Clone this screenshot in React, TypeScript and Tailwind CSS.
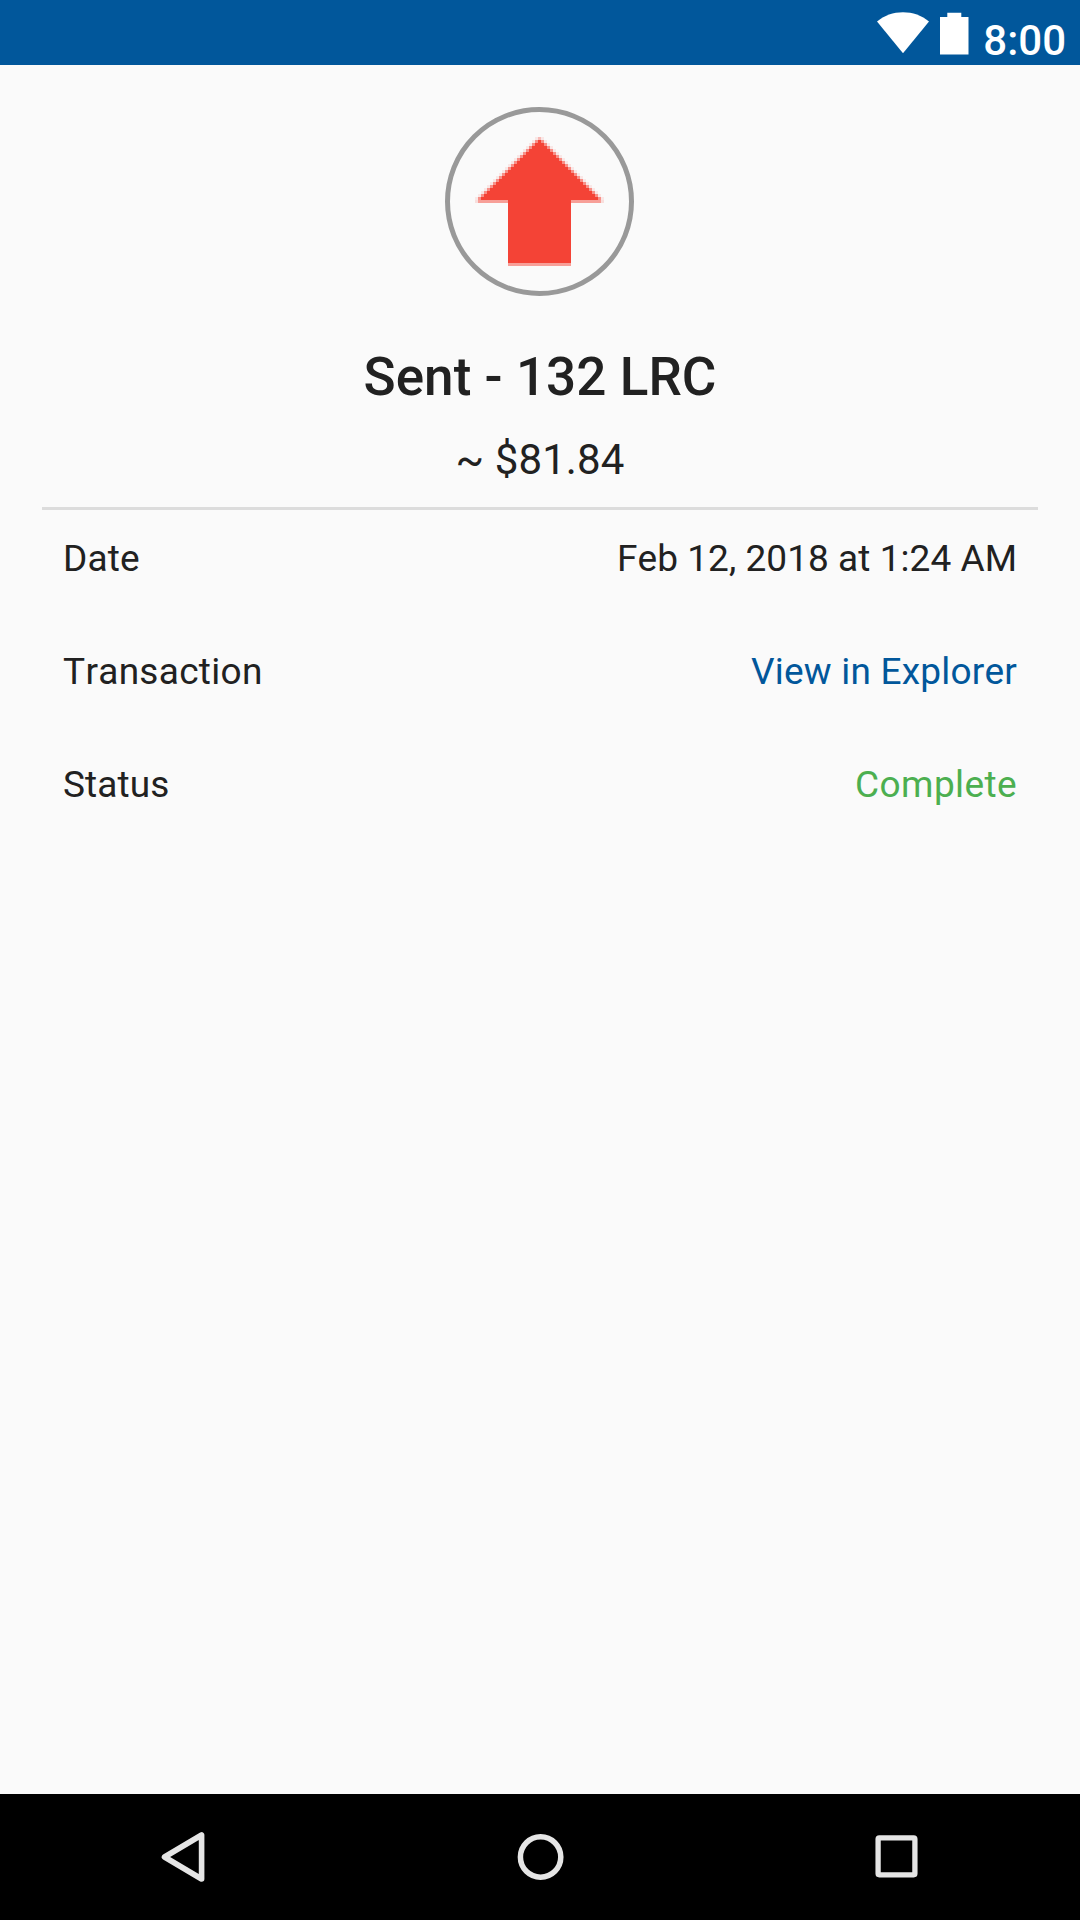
const arrowRows = Array.from({ length: 21 }, (_, i) => i);

function SentArrow() {
  return (
    <svg className="h-[129px] w-[129px]" viewBox="0 0 43 43" shapeRendering="crispEdges" fill="#f44336">
      {arrowRows.map((i) => (
        <g key={i}>
          {i > 0 && <rect x={22 - i} y={i} width={2 * i - 1} height={1} />}
          <rect x={21 - i} y={i} width={1} height={1} opacity={i === 0 ? 0.35 : 0.58} />
          {i > 0 && <rect x={21 + i} y={i} width={1} height={1} opacity={0.58} />}
          <rect x={20 - i} y={i} width={1} height={1} opacity={0.1} />
          <rect x={22 + i} y={i} width={1} height={1} opacity={0.1} />
        </g>
      ))}
      <rect x={1} y={21} width={41} height={1} opacity={0.5} />
      <rect x={0} y={21} width={1} height={1} opacity={0.15} />
      <rect x={42} y={21} width={1} height={1} opacity={0.15} />
      <rect x={11} y={21} width={21} height={21} />
      <rect x={11} y={42} width={21} height={1} opacity={0.5} />
    </svg>
  );
}

export default function App() {
  return (
    <div className="flex h-[1920px] w-[1080px] flex-col overflow-hidden bg-[#fafafa] font-[Roboto,sans-serif] text-[#212121] [font-kerning:none]">
      <header className="flex h-[65px] shrink-0 items-start justify-end bg-[#01579b] pr-[14px] text-white">
        <svg className="mt-3 h-[42px] w-[52px] shrink-0" viewBox="0 0 52 42"><path d="M0 9.5C14-3 38-3 52 9.5L26 41.3Z" fill="currentColor" /></svg>
        <svg className="mt-3 ml-[11px] h-[43px] w-[29px] shrink-0" viewBox="0 0 29 43"><path d="M7.3.8h14V5h7.2v37.4H0V5h7.3z" fill="currentColor" /></svg>
        <span className="mt-4 ml-[14px] text-[42px] leading-[49px] font-medium">8:00</span>
      </header>
      <main className="flex min-h-0 flex-1 flex-col px-[42px]">
        <div className="mt-[42px] mr-px flex h-[189px] w-[189px] items-center justify-center self-center rounded-full border-[5px] border-[#999999]">
          <SentArrow />
        </div>
        <h1 className="mt-[49px] text-center text-[53px] leading-[64px] font-medium tracking-[0.06px]">Sent - 132 LRC</h1>
        <p className="mt-[26px] text-center text-[42px] leading-[50px] tracking-[0.1px]">~ $81.84</p>
        <div className="mt-[22px] h-[3px] bg-[#dcdcdc]" />
        <dl className="flex flex-col px-[21px] text-[37px]">
          <div className="mb-px flex h-[98px] items-center justify-between"><dt className="tracking-[0.2px]">Date</dt><dd className="tracking-[0.05px]">Feb 12, 2018 at 1:24 AM</dd></div>
          <div className="flex h-[126px] items-center justify-between"><dt className="tracking-[0.3px]">Transaction</dt><dd className="tracking-[0.2px] text-[#01579b]">View in Explorer</dd></div>
          <div className="flex h-[100px] items-center justify-between"><dt className="tracking-[0.1px]">Status</dt><dd className="tracking-[0.4px] text-[#4caf50]">Complete</dd></div>
        </dl>
      </main>
      <nav className="flex h-[126px] shrink-0 justify-between bg-black px-[132px] text-[#e5e5e5]">
        <svg className="h-[126px] w-[100px]" viewBox="0 0 100 126" fill="none" stroke="currentColor" strokeWidth="5.6" strokeLinejoin="round"><path d="M69.6 41v44L32.5 63z" /></svg>
        <svg className="h-[126px] w-[100px]" viewBox="0 0 100 126" fill="none" stroke="currentColor" strokeWidth="5.5"><circle cx="50.6" cy="63" r="20.2" /></svg>
        <svg className="h-[126px] w-[100px]" viewBox="0 0 100 126" fill="none" stroke="currentColor" strokeWidth="5.3"><rect x="30.1" y="43.8" width="36.8" height="37" rx="1.2" /></svg>
      </nav>
    </div>
  );
}
